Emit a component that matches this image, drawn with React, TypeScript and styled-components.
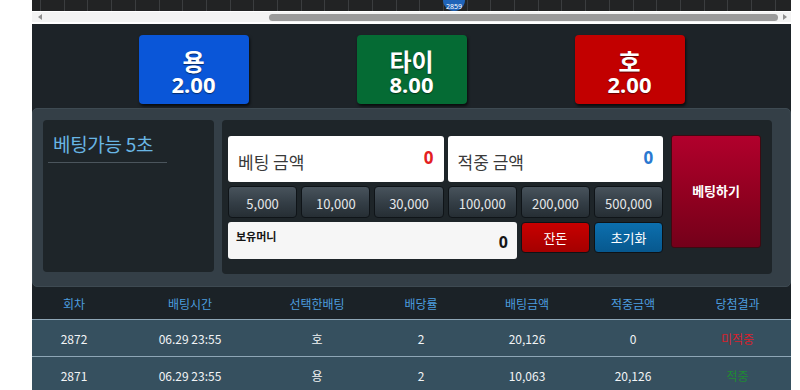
import styled, { createGlobalStyle } from "styled-components";

const GlobalStyle = createGlobalStyle`
  html, body {
    margin: 0;
    padding: 0;
    background: #ffffff;
    overflow: hidden;
  }
  body {
    font-family: "Noto Sans CJK KR", "Noto Sans", sans-serif;
  }
`;

const Page = styled.div`
  width: 759px;
  margin-left: 32px;
`;

const ChartStrip = styled.div`
  position: relative;
  height: 11px;
  background-color: #222324;
  background-image: repeating-linear-gradient(
    to right,
    transparent 0,
    transparent 8px,
    #3b3d3f 8px,
    #3b3d3f 9px,
    transparent 9px,
    transparent 23.7px
  );
  overflow: hidden;
`;

const Marker = styled.div`
  position: absolute;
  left: 411px;
  top: -11px;
  width: 22px;
  height: 22px;
  border-radius: 50%;
  background: #1f63b8;
  color: #ffffff;
  font-size: 7px;
  font-family: "Noto Sans", sans-serif;
  display: flex;
  align-items: flex-end;
  justify-content: center;
  line-height: 9px;
`;

const ScrollBar = styled.div`
  display: flex;
  align-items: center;
  height: 10px;
  margin-top: 1px;
  background: #f3f3f3;
  padding: 0 4px 0 6px;
`;

const Arrow = styled.div<{ $dir: "left" | "right" }>`
  width: 0;
  height: 0;
  border-top: 3.5px solid transparent;
  border-bottom: 3.5px solid transparent;
  ${(p) =>
    p.$dir === "left"
      ? "border-right: 4px solid #8f8f8f;"
      : "border-left: 4px solid #8f8f8f;"}
`;

const Track = styled.div`
  flex: 1;
  display: flex;
  padding-left: 227px;
  padding-right: 5px;
`;

const Thumb = styled.div`
  flex: 1;
  height: 7px;
  border-radius: 4px;
  background: #9a9a9a;
`;

const Board = styled.div`
  margin-top: 2px;
  background: #1d2328;
`;

const OddsRow = styled.div`
  display: flex;
  justify-content: center;
  gap: 108px;
  padding-top: 11px;
  height: 73px;
`;

const OddsButton = styled.div<{ $bg: string }>`
  width: 110px;
  height: 69px;
  border-radius: 4px;
  background: ${(p) => p.$bg};
  box-shadow: 1px 2px 3px rgba(0, 0, 0, 0.7);
  display: flex;
  flex-direction: column;
  align-items: center;
  justify-content: center;
  color: #ffffff;
  font-family: "Noto Sans", "Noto Sans CJK KR", sans-serif;
  font-weight: 700;
  text-shadow: 0 1px 1px rgba(0, 0, 0, 0.5);
  padding-top: 4px;
  box-sizing: border-box;
`;

const OddsName = styled.div`
  font-size: 24px;
  line-height: 25px;
  font-family: "Noto Sans CJK KR", sans-serif;
`;

const OddsValue = styled.div`
  font-size: 22px;
  line-height: 23px;
`;

const BetPanel = styled.div`
  display: flex;
  align-items: flex-start;
  gap: 8px;
  background: #343f47;
  border-radius: 5px;
  padding: 11px 18px 14px 10px;
  border: 1px solid #3e4a52;
  box-sizing: border-box;
  height: 179px;
`;

const TimerBox = styled.div`
  width: 173px;
  height: 152px;
  background: #1e2529;
  border-radius: 4px;
  padding: 0 5px;
  box-sizing: border-box;
`;

const TimerTitle = styled.div`
  width: 119px;
  height: 43px;
  padding-left: 5px;
  box-sizing: border-box;
  border-bottom: 1px solid #4b555c;
  color: #69b6e4;
  font-size: 19px;
  line-height: 48px;
  letter-spacing: -0.3px;
  white-space: nowrap;
`;

const BetBox = styled.div`
  display: flex;
  gap: 8px;
  width: 550px;
  height: 154px;
  background: #1e2529;
  border-radius: 4px;
  padding: 15px 11px 0 6px;
  box-sizing: border-box;
`;

const Controls = styled.div`
  width: 436px;
  display: grid;
  grid-template-columns: repeat(6, 1fr);
  grid-template-rows: 46px 32px 37px;
  column-gap: 4px;
  row-gap: 4px;
  margin-top: 1px;
`;

const AmountField = styled.div`
  grid-column: span 3;
  background: #ffffff;
  border-radius: 3px;
  display: flex;
  align-items: center;
  justify-content: space-between;
  padding: 0 10px 4px 10px;
  box-sizing: border-box;
`;

const AmountLabel = styled.span`
  color: #3a3a3a;
  font-size: 17px;
  padding-top: 8px;
`;

const AmountValue = styled.span<{ $color: string }>`
  color: ${(p) => p.$color};
  font-size: 17px;
  font-weight: 700;
  font-family: "Noto Sans", sans-serif;
`;

const ChipButton = styled.div`
  background: linear-gradient(to bottom, #48535c 0%, #333d45 55%, #262e34 100%);
  border: 1px solid #0f1418;
  border-radius: 4px;
  color: #e4e6e8;
  font-size: 13px;
  display: flex;
  align-items: center;
  justify-content: center;
  padding-top: 2px;
  box-sizing: border-box;
`;

const BalanceField = styled.div`
  grid-column: span 4;
  background: #f6f6f6;
  border-radius: 3px;
  position: relative;
  display: flex;
  align-items: center;
  justify-content: flex-end;
  padding: 2px 9px 0 8px;
  box-sizing: border-box;
`;

const BalanceLabel = styled.span`
  position: absolute;
  left: 8px;
  top: 6px;
  font-size: 11px;
  font-weight: 700;
  color: #151515;
`;

const BalanceValue = styled.span`
  font-size: 16px;
  font-weight: 700;
  color: #151515;
  font-family: "Noto Sans", sans-serif;
`;

const ActionButton = styled.div<{ $from: string; $to: string }>`
  height: 31px;
  background: linear-gradient(to bottom, ${(p) => p.$from}, ${(p) => p.$to});
  border: 1px solid #0e1216;
  border-radius: 4px;
  color: #ffffff;
  font-size: 13px;
  display: flex;
  align-items: center;
  justify-content: center;
  box-sizing: border-box;
`;

const PlaceBetButton = styled.div`
  width: 90px;
  height: 113px;
  background: linear-gradient(to bottom, #b1002c 0%, #900020 55%, #74001a 100%);
  border: 1px solid #3d0a12;
  border-radius: 3px;
  color: #ffffff;
  font-size: 13px;
  font-weight: 700;
  display: flex;
  align-items: center;
  justify-content: center;
  box-sizing: border-box;
  padding-bottom: 2px;
`;

const columns = "84px 148px 106px 102px 110px 102px 1fr";

const TableHead = styled.div`
  display: grid;
  grid-template-columns: ${columns};
  height: 32px;
  align-items: center;
  border-bottom: 1px solid #8ea6b6;
  background: #1b2227;
  color: #4c9ddf;
  font-size: 12px;
  text-align: center;
`;

const TableRow = styled.div`
  display: grid;
  grid-template-columns: ${columns};
  height: 36px;
  align-items: center;
  border-bottom: 1px solid #8ea6b6;
  background: #36505f;
  color: #f2f4f6;
  font-size: 12px;
  text-align: center;
`;

const Result = styled.span<{ $win: boolean }>`
  color: ${(p) => (p.$win ? "#1e8a33" : "#d9202c")};
`;

const odds = [
  { name: "용", value: "2.00", bg: "#0a56d8" },
  { name: "타이", value: "8.00", bg: "#056b34" },
  { name: "호", value: "2.00", bg: "#c20000" },
];

const chips = ["5,000", "10,000", "30,000", "100,000", "200,000", "500,000"];

const headers = ["회차", "배팅시간", "선택한배팅", "배당률", "배팅금액", "적중금액", "당첨결과"];

const history = [
  { round: "2872", time: "06.29 23:55", pick: "호", rate: "2", bet: "20,126", hit: "0", win: false },
  { round: "2871", time: "06.29 23:55", pick: "용", rate: "2", bet: "10,063", hit: "20,126", win: true },
];

export default function App() {
  return (
    <>
      <GlobalStyle />
      <Page>
        <ChartStrip>
          <Marker>2859</Marker>
        </ChartStrip>
        <ScrollBar>
          <Arrow $dir="left" />
          <Track>
            <Thumb />
          </Track>
          <Arrow $dir="right" />
        </ScrollBar>
        <Board>
          <OddsRow>
            {odds.map((o) => (
              <OddsButton key={o.name} $bg={o.bg}>
                <OddsName>{o.name}</OddsName>
                <OddsValue>{o.value}</OddsValue>
              </OddsButton>
            ))}
          </OddsRow>
          <BetPanel>
            <TimerBox>
              <TimerTitle>베팅가능 5초</TimerTitle>
            </TimerBox>
            <BetBox>
              <Controls>
                <AmountField>
                  <AmountLabel>베팅 금액</AmountLabel>
                  <AmountValue $color="#e3201f">0</AmountValue>
                </AmountField>
                <AmountField>
                  <AmountLabel>적중 금액</AmountLabel>
                  <AmountValue $color="#2a78d0">0</AmountValue>
                </AmountField>
                {chips.map((c) => (
                  <ChipButton key={c}>{c}</ChipButton>
                ))}
                <BalanceField>
                  <BalanceLabel>보유머니</BalanceLabel>
                  <BalanceValue>0</BalanceValue>
                </BalanceField>
                <ActionButton $from="#c80000" $to="#a40000">
                  잔돈
                </ActionButton>
                <ActionButton $from="#0c6fae" $to="#07588e">
                  초기화
                </ActionButton>
              </Controls>
              <PlaceBetButton>베팅하기</PlaceBetButton>
            </BetBox>
          </BetPanel>
          <TableHead>
            {headers.map((h) => (
              <div key={h}>{h}</div>
            ))}
          </TableHead>
          {history.map((r) => (
            <TableRow key={r.round}>
              <div>{r.round}</div>
              <div>{r.time}</div>
              <div>{r.pick}</div>
              <div>{r.rate}</div>
              <div>{r.bet}</div>
              <div>{r.hit}</div>
              <div>
                <Result $win={r.win}>{r.win ? "적중" : "미적중"}</Result>
              </div>
            </TableRow>
          ))}
        </Board>
      </Page>
    </>
  );
}
